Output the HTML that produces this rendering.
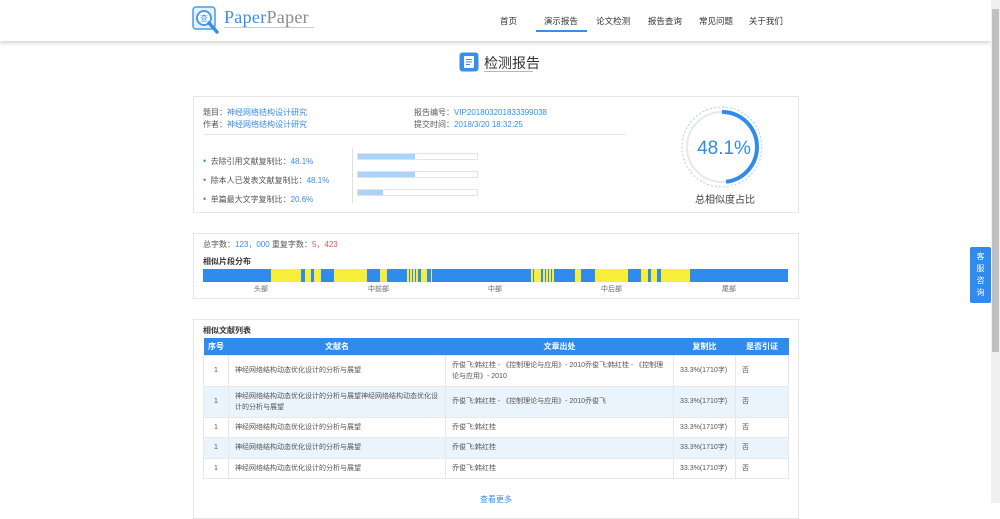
<!DOCTYPE html>
<html><head><meta charset="utf-8"><style>
*{margin:0;padding:0;box-sizing:border-box}
body{width:1000px;height:503px;overflow:hidden;background:#fff;font-family:"Liberation Sans","Noto Sans CJK SC",sans-serif;color:#555;font-size:8px;position:relative}
.a{position:absolute}
.blue{color:#3a8ee6}
.panel{position:absolute;left:193px;width:606px;border:1px solid #e6e6e6;background:#fff}
table{border-collapse:collapse;position:absolute;left:203px;top:338px;width:586px;font-size:7px;color:#555}
th{background:#2f8cee;color:#fff;height:17px;font-weight:bold;font-size:8px}
td{border:1px solid #e8e8e8;padding:0 6px;line-height:11px}
tr.alt td{background:#eaf4fd}
</style></head><body>
<div class="a" style="left:0;top:0;width:991px;height:41px;background:#fff;box-shadow:0 2px 4px rgba(0,0,0,.18)"></div>
<svg class="a" style="left:192px;top:6px" width="30" height="30" viewBox="0 0 30 30"><rect x="1" y="1" width="22" height="22" rx="3" fill="#e8f2fd" stroke="#4a9be8" stroke-width="1.5"/><circle cx="12" cy="12" r="7" fill="#fff" stroke="#4a9be8" stroke-width="2"/><line x1="17" y1="17" x2="25" y2="26" stroke="#3a8ee6" stroke-width="3.5" stroke-linecap="round"/><text x="12" y="15" font-size="8" fill="#4a9be8" text-anchor="middle" font-family="Noto Sans CJK SC">查</text></svg>
<div class="a" style="left:224px;top:7px;font-family:'Liberation Serif',serif;font-size:18px;color:#3a8ee6;letter-spacing:.3px">Paper<span style="color:#8a8a8a">Paper</span></div>
<div class="a" style="left:224px;top:27px;width:90px;height:1px;background:#ccc"></div>
<div class="a" style="top:15px;left:500px;font-size:8.5px;color:#333;width:290px;display:flex">
<span style="width:36px">首页</span><span style="width:54px;text-align:center">演示报告</span><span style="width:54px;text-align:center">论文检测</span><span style="width:53px;text-align:center">报告查询</span><span style="width:53px;text-align:center">常见问题</span><span style="width:50px;text-align:center">关于我们</span></div>
<div class="a" style="left:536px;top:30px;width:51px;height:2px;background:#3a8ee6"></div>
<svg class="a" style="left:459px;top:52px" width="20" height="20"><rect x="0.5" y="0.5" width="19" height="19" rx="3" fill="#3a8ee6"/><rect x="5" y="4" width="10" height="12" rx="1" fill="#fff"/><line x1="7" y1="7.5" x2="13" y2="7.5" stroke="#3a8ee6"/><line x1="7" y1="10" x2="13" y2="10" stroke="#3a8ee6"/><line x1="7" y1="12.5" x2="11" y2="12.5" stroke="#3a8ee6"/></svg>
<div class="a" style="left:484px;top:53px;font-size:14px;color:#333">检测报告</div>
<div class="a" style="left:484px;top:71px;width:49px;height:1px;background:#8cc0f2"></div>

<div class="panel" style="top:96px;height:117px"></div>
<div class="a" style="left:203px;top:107px;line-height:12px">题目：<span class="blue">神经网络结构设计研究</span><br>作者：<span class="blue">神经网络结构设计研究</span></div>
<div class="a" style="left:414px;top:107px;line-height:12px">报告编号：<span class="blue">VIP201803201833399038</span><br>提交时间：<span class="blue">2018/3/20 18:32:25</span></div>
<div class="a" style="left:203px;top:134px;width:423px;height:1px;background:#e6e6e6"></div>
<div class="a" style="left:352px;top:148px;width:1px;height:55px;background:#e0e0e0"></div>
<div class="a" style="left:203px;top:152px;line-height:18px">
<div><span class="blue" style="font-size:9px">•</span>&nbsp;&nbsp;去除引用文献复制比：<span class="blue">48.1%</span></div>
<div><span class="blue" style="font-size:9px">•</span>&nbsp;&nbsp;除本人已发表文献复制比：<span class="blue">48.1%</span></div>
<div><span class="blue" style="font-size:9px">•</span>&nbsp;&nbsp;单篇最大文字复制比：<span class="blue">20.6%</span></div></div>
<div class="a" style="left:357px;top:153px;width:121px;height:7px;border:1px solid #e3e3e3"><div style="width:48%;height:100%;background:#acd3f5"></div></div>
<div class="a" style="left:357px;top:171px;width:121px;height:7px;border:1px solid #e3e3e3"><div style="width:48%;height:100%;background:#acd3f5"></div></div>
<div class="a" style="left:357px;top:189px;width:121px;height:7px;border:1px solid #e3e3e3"><div style="width:21%;height:100%;background:#acd3f5"></div></div>
<svg class="a" style="left:680px;top:105px" width="84" height="84" viewBox="0 0 84 84"><circle cx="42" cy="42" r="40" fill="none" stroke="#a9d0f5" stroke-dasharray="2 2"/><circle cx="42" cy="42" r="35" fill="none" stroke="#e8e8e8" stroke-width="2"/><circle cx="42" cy="42" r="35" fill="none" stroke="#2f8cee" stroke-width="4" stroke-dasharray="105.7 220" transform="rotate(-90 42 42)"/><text x="44" y="49" font-size="19" fill="#2f8cee" text-anchor="middle" font-family="Liberation Sans">48.1%</text></svg>
<div class="a" style="left:695px;top:191px;font-size:10px;color:#444">总相似度占比</div>

<div class="panel" style="top:233px;height:66px"></div>
<div class="a" style="left:203px;top:239px">总字数：<span class="blue">123，000</span> 重复字数：<span style="color:#e05555">5，423</span></div>
<div class="a" style="left:203px;top:256px;font-weight:bold;color:#333">相似片段分布</div>
<div class="a" style="left:203px;top:269px;width:585px;height:13px;background:#2f8cee">
<div class="a" style="top:0;height:13px;background:#f7ee3a;left:11.7%;width:5.1%"></div>
<div class="a" style="top:0;height:13px;background:#f7ee3a;left:17.4%;width:1.1%"></div>
<div class="a" style="top:0;height:13px;background:#f7ee3a;left:19%;width:1.1%"></div>
<div class="a" style="top:0;height:13px;background:#f7ee3a;left:22.4%;width:5.7%"></div>
<div class="a" style="top:0;height:13px;background:#f7ee3a;left:30.2%;width:1.2%"></div>
<div class="a" style="top:0;height:13px;background:repeating-linear-gradient(90deg,#f7ee3a 0 2px,#2f8cee 2px 3px);left:34.9%;width:1.9%"></div>
<div class="a" style="top:0;height:13px;background:#f7ee3a;left:37.2%;width:1.1%"></div>
<div class="a" style="top:0;height:13px;background:#f7ee3a;left:38.9%;width:.3%"></div>
<div class="a" style="top:0;height:13px;background:#f7ee3a;left:56%;width:.4%"></div>
<div class="a" style="top:0;height:13px;background:#f7ee3a;left:56.6%;width:1.1%"></div>
<div class="a" style="top:0;height:13px;background:repeating-linear-gradient(90deg,#f7ee3a 0 2px,#2f8cee 2px 3px);left:58.1%;width:1.9%"></div>
<div class="a" style="top:0;height:13px;background:#f7ee3a;left:63.6%;width:1.1%"></div>
<div class="a" style="top:0;height:13px;background:#f7ee3a;left:67%;width:5.6%"></div>
<div class="a" style="top:0;height:13px;background:#f7ee3a;left:74.9%;width:1.1%"></div>
<div class="a" style="top:0;height:13px;background:#f7ee3a;left:76.5%;width:1.1%"></div>
<div class="a" style="top:0;height:13px;background:#f7ee3a;left:78.3%;width:5%"></div>
</div>
<div class="a" style="top:284px;left:254px;font-size:7px;color:#666">头部</div>
<div class="a" style="top:284px;left:368px;font-size:7px;color:#666">中前部</div>
<div class="a" style="top:284px;left:488px;font-size:7px;color:#666">中部</div>
<div class="a" style="top:284px;left:601px;font-size:7px;color:#666">中后部</div>
<div class="a" style="top:284px;left:722px;font-size:7px;color:#666">尾部</div>

<div class="panel" style="top:319px;height:200px"></div>
<div class="a" style="left:203px;top:325px;font-weight:bold;color:#333">相似文献列表</div>
<table>
<tr><th style="width:25px">序号</th><th style="width:217px">文献名</th><th style="width:228px">文章出处</th><th style="width:62px">复制比</th><th>是否引证</th></tr>
<tr style="height:31px"><td style="text-align:center">1</td><td>神经网络结构动态优化设计的分析与展望</td><td>乔俊飞;韩红桂 - 《控制理论与应用》- 2010乔俊飞;韩红桂 - 《控制理论与应用》- 2010</td><td>33.3%(1710字)</td><td>否</td></tr>
<tr class="alt" style="height:31px"><td style="text-align:center">1</td><td>神经网络结构动态优化设计的分析与展望神经网络结构动态优化设计的分析与展望</td><td>乔俊飞;韩红桂 - 《控制理论与应用》- 2010乔俊飞</td><td>33.3%(1710字)</td><td>否</td></tr>
<tr style="height:20px"><td style="text-align:center">1</td><td>神经网络结构动态优化设计的分析与展望</td><td>乔俊飞;韩红桂</td><td>33.3%(1710字)</td><td>否</td></tr>
<tr class="alt" style="height:21px"><td style="text-align:center">1</td><td>神经网络结构动态优化设计的分析与展望</td><td>乔俊飞;韩红桂</td><td>33.3%(1710字)</td><td>否</td></tr>
<tr style="height:20px"><td style="text-align:center">1</td><td>神经网络结构动态优化设计的分析与展望</td><td>乔俊飞;韩红桂</td><td>33.3%(1710字)</td><td>否</td></tr>
</table>
<div class="a" style="left:480px;top:494px;color:#3a8ee6">查看更多</div>

<div class="a" style="left:970px;top:247px;width:21px;height:56px;background:#2f8cee;border-radius:2px;color:#fff;font-size:8px;text-align:center;line-height:12px;padding-top:4px">客<br>服<br>咨<br>询</div>
<div class="a" style="left:991px;top:0;width:9px;height:503px;background:#f0f0f0"></div>
<div class="a" style="left:992px;top:9px;width:7px;height:343px;background:#c1c1c1"></div>
</body></html>
